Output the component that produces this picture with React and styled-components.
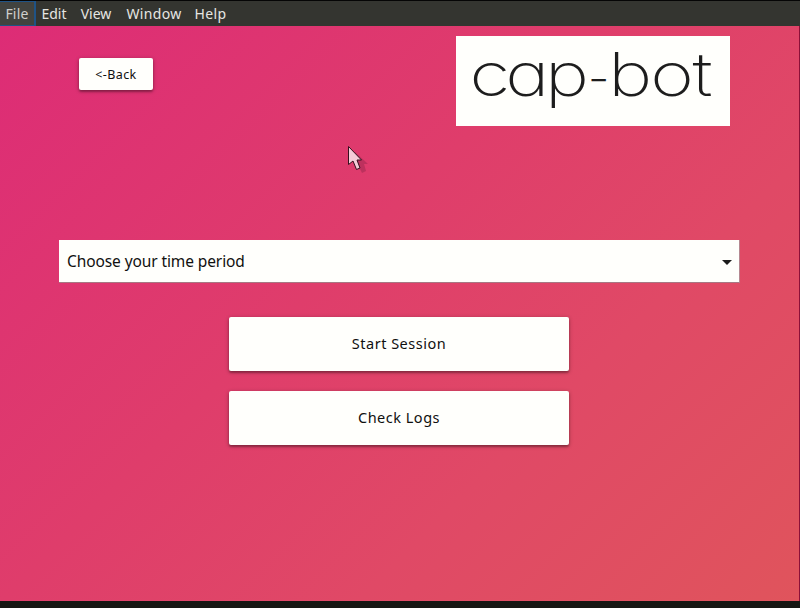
import React from "react";
import styled, { createGlobalStyle } from "styled-components";

const GlobalStyle = createGlobalStyle`
  * { box-sizing: border-box; }
  body { margin: 0; overflow: hidden; background: #151612; }
  body, button { font-family: "Noto Sans", "Open Sans", sans-serif; }
`;

const Window = styled.div`
  position: relative;
  display: flex;
  flex-direction: column;
  width: 800px;
  height: 608px;
  background: #151612;
`;

const MenuBar = styled.nav`
  display: flex;
  height: 26px;
  border-top: 1px solid #050505;
  background: #343530;
`;

const MenuItem = styled.span`
  display: flex;
  align-items: center;
  justify-content: center;
  width: ${(p) => p.$width}px;
  height: 25px;
  font-size: 14px;
  line-height: 25px;
  letter-spacing: ${(p) => p.$spacing || 0}px;
  white-space: nowrap;
  color: ${(p) => (p.$focused ? "#d0d0cd" : "#e6e6e2")};
  background: ${(p) => (p.$focused ? "#42433f" : "transparent")};
  border: ${(p) => (p.$focused ? "1px solid #1f5385" : "0")};
  border-right-width: ${(p) => (p.$focused ? "2px" : "0")};
  border-left: 0;
`;

const Screen = styled.main`
  display: flex;
  flex-direction: column;
  align-items: center;
  height: 575px;
  padding: 10px 1px 0 0;
  border-right: 1px solid #8c1038;
  background: linear-gradient(135deg, #dd2c76, #df3d6b 42%, #e04966 68%, #e0545c);
`;

const Header = styled.header`
  display: flex;
  justify-content: space-between;
  align-items: flex-start;
  width: 651px;
  height: 90px;
  margin-left: 11px;
`;

const RaisedButton = styled.button`
  display: flex;
  align-items: center;
  justify-content: center;
  padding: 0;
  border: 0;
  border-radius: 2px;
  color: #10100f;
  background: #fffffc;
  box-shadow: 0 2px 2px rgba(0, 0, 0, 0.24), 0 1px 4px rgba(0, 0, 0, 0.3);
`;

const BackButton = styled(RaisedButton)`
  width: 74px;
  height: 32px;
  margin-top: 22px;
  font-size: 12.5px;
  letter-spacing: 0.4px;
`;

const ActionButton = styled(RaisedButton)`
  width: 340px;
  height: 54px;
  padding-bottom: 2px;
  font-size: 14.5px;
  letter-spacing: 0.5px;
`;

const Logo = styled.svg`
  display: block;
  width: 274px;
  height: 90px;
  background: #fffffc;
`;

const LogoText = styled.text`
  font-family: Inter, sans-serif;
  font-size: 60px;
  font-weight: 150;
  font-feature-settings: "cv11";
  fill: #1d1d1d;
`;

const LogoDash = styled.tspan`
  font-size: 38px;
  font-weight: 300;
`;

const PeriodSelect = styled.div`
  display: flex;
  align-items: center;
  justify-content: space-between;
  width: 681px;
  height: 43px;
  margin: 114px 0 0 1px;
  padding: 0 7px 0 8px;
  border-right: 1px solid #b58891;
  border-bottom: 1px solid #a77883;
  font-size: 15.5px;
  letter-spacing: -0.1px;
  color: #10100f;
  background: #fffffc;
`;

const Caret = styled.svg`
  width: 10px;
  height: 5px;
  margin-top: 2px;
`;

const Actions = styled.section`
  display: flex;
  flex-direction: column;
  gap: 20px;
  margin-top: 34px;
`;

const Pointer = styled.svg`
  position: absolute;
  left: 346px;
  top: 144px;
  width: 26px;
  height: 34px;
`;

const MENU = [
  { label: "File", width: 36, focused: true, spacing: 0.2 },
  { label: "Edit", width: 36 },
  { label: "View", width: 48 },
  { label: "Window", width: 68, spacing: 0.3 },
  { label: "Help", width: 45, spacing: 0.4 },
];

export default function App() {
  return (
    <>
      <GlobalStyle />
      <Window>
        <MenuBar>
          {MENU.map((m) => (
            <MenuItem key={m.label} $width={m.width} $focused={m.focused} $spacing={m.spacing}>
              {m.label}
            </MenuItem>
          ))}
        </MenuBar>
        <Screen>
          <Header>
            <BackButton>&lt;-Back</BackButton>
            <Logo viewBox="0 0 274 90" role="img" aria-label="cap-bot">
              <LogoText transform="scale(1.24 1)">
                <tspan y="60" x="10.8 39.7 71.8">cap</tspan>
                <LogoDash y="56" x="106.4">-</LogoDash>
                <tspan y="60" x="122.8 156.7 190.8">bot</tspan>
              </LogoText>
            </Logo>
          </Header>
          <PeriodSelect role="combobox">
            <span>Choose your time period</span>
            <Caret viewBox="0 0 10 5">
              <path d="M0 0H10L5 5Z" fill="#1b1b1b" />
            </Caret>
          </PeriodSelect>
          <Actions>
            <ActionButton>Start Session</ActionButton>
            <ActionButton>Check Logs</ActionButton>
          </Actions>
        </Screen>
        <Pointer viewBox="0 0 26 34">
          <path d="M9 8V24L12 21L16 29L20 27L18 20H22Z" fill="#701a3b" opacity=".3" />
          <path
            d="M2.5 2.5V20.5L7 17L10.5 25.5L14 24L11 16H15.5Z"
            fill="#f5cbd8"
            stroke="#36101e"
            strokeLinejoin="round"
          />
        </Pointer>
      </Window>
    </>
  );
}
